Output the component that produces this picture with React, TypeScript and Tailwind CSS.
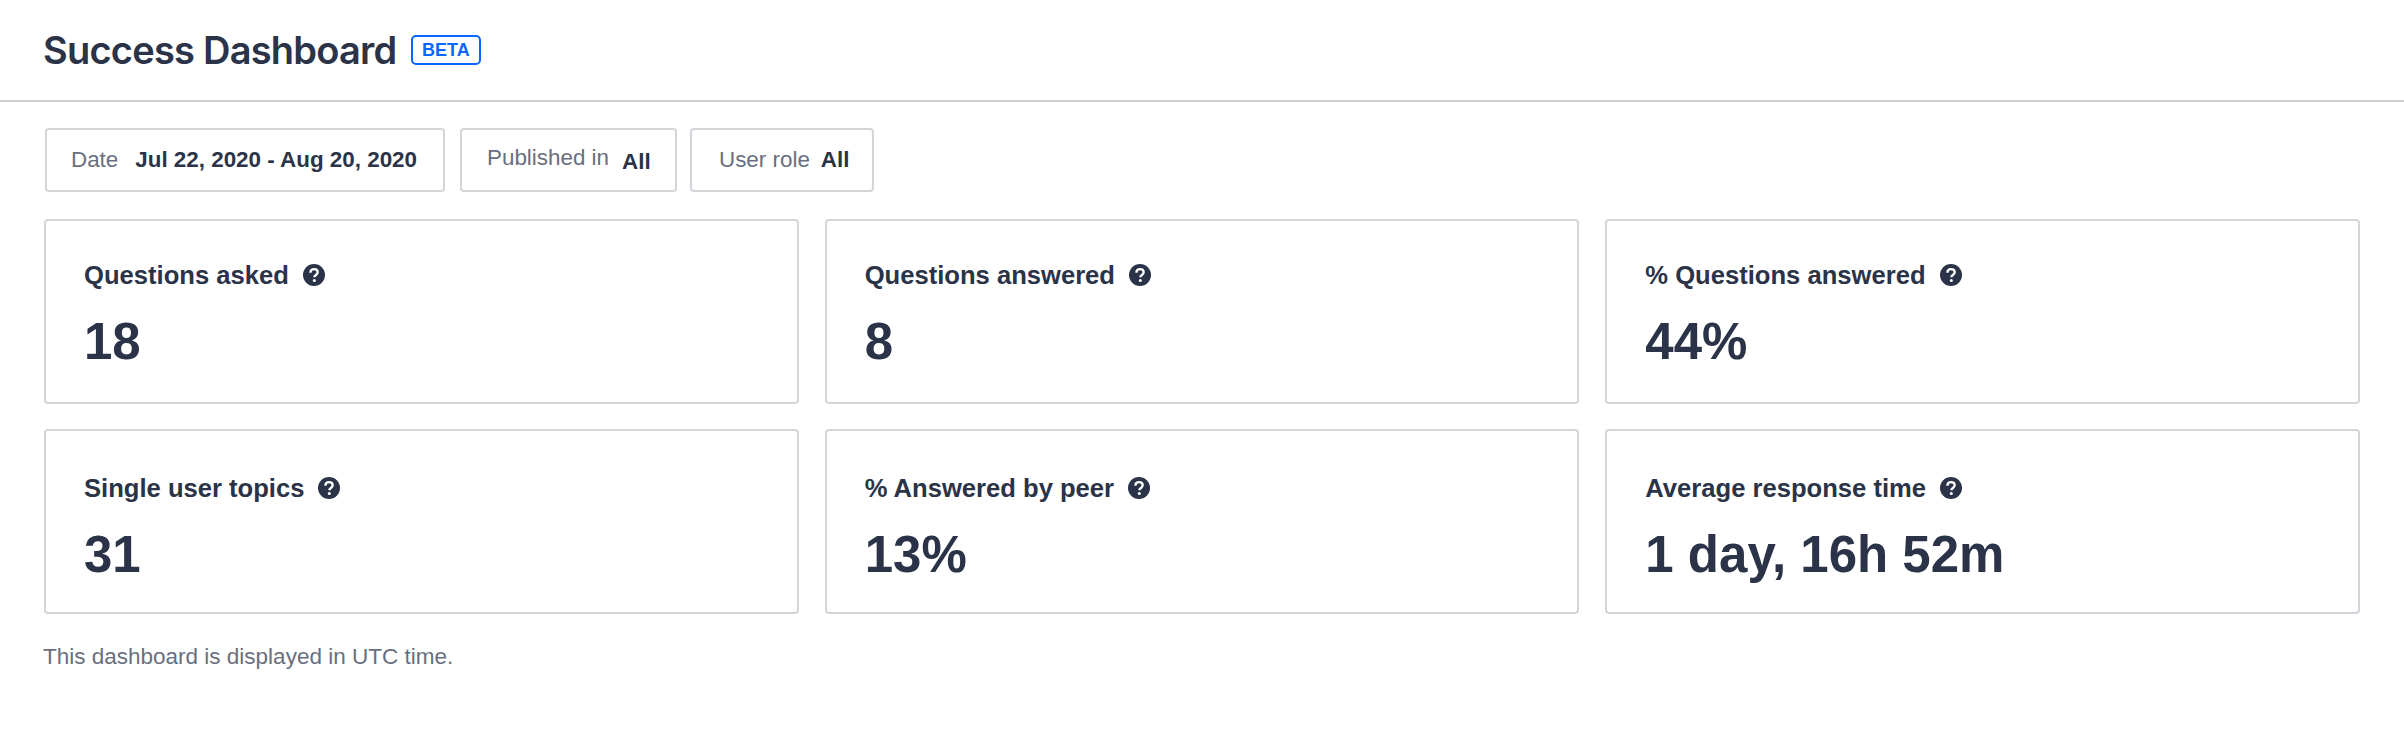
const font = "font-['Liberation_Sans',Arial,sans-serif]";

function HelpIcon() {
  return (
    <svg viewBox="0 0 22 22" className="h-[22px] w-[22px] shrink-0">
      <circle cx="11" cy="11" r="11" fill="#2a3348" />
      <path d="M7.4 8.7c0-2.2 1.6-3.5 3.7-3.5s3.6 1.3 3.6 3.1c0 2.6-3.4 2.7-3.4 5" fill="none" stroke="#fff" strokeWidth="2.3" />
      <circle cx="11.3" cy="16.6" r="1.5" fill="#fff" />
    </svg>
  );
}

function Filter({ label, value, box, shifted }: { label: string; value: string; box: string; shifted?: boolean }) {
  return (
    <div className={`flex h-[64px] items-center rounded-[4px] border-2 border-[#d3d5da] ${box}`}>
      <span className={`text-[22.4px] text-[#696f80] ${shifted ? "-translate-y-0.5" : ""}`}>{label}</span>
      <span className={`text-[22.4px] font-bold text-[#2a3348] ${shifted ? "translate-y-0.5" : ""}`}>{value}</span>
    </div>
  );
}

function Card({ title, value, low }: { title: string; value: string; low?: boolean }) {
  return (
    <div className={`flex h-[185px] flex-col rounded-[4px] border-2 border-[#d3d5da] px-[38px] ${low ? "pt-[41px]" : "pt-[38px]"}`}>
      <div className="flex h-[32px] items-center gap-[14px]">
        <span className="text-[25.6px] font-bold text-[#2a3348]">{title}</span>
        <HelpIcon />
      </div>
      <div className="mt-[21px] text-[51px] leading-[60px] font-bold text-[#2a3348]">{value}</div>
    </div>
  );
}

export default function App() {
  return (
    <div className={`h-[756px] bg-white ${font}`}>
      <header className="flex h-[102px] items-center gap-[14px] border-b-2 border-[#cfd0d3] px-[43px]">
        <h1 className="font-['Inter'] text-[38px] font-semibold tracking-[-0.02em] text-[#2a3348]">Success Dashboard</h1>
        <span className="rounded-[5px] border-2 border-[#0a66ff] px-[9.5px] text-[18px] leading-[26px] font-bold text-[#0a66ff]">BETA</span>
      </header>
      <div className="px-[44px] pt-[26px]">
        <div className="flex pl-px">
          <Filter label="Date" value="Jul 22, 2020 - Aug 20, 2020" box="w-[400px] gap-[17px] pl-[24px]" />
          <Filter label="Published in" value="All" box="ml-[15px] w-[217px] gap-[13px] pl-[25px]" shifted />
          <Filter label="User role" value="All" box="ml-[13px] w-[184px] gap-[11px] pl-[27px]" />
        </div>
        <div className="mt-[27px] grid grid-cols-3 gap-x-[26px] gap-y-[25px]">
          <Card title="Questions asked" value="18" />
          <Card title="Questions answered" value="8" />
          <Card title="% Questions answered" value="44%" />
          <Card title="Single user topics" value="31" low />
          <Card title="% Answered by peer" value="13%" low />
          <Card title="Average response time" value="1 day, 16h 52m" low />
        </div>
        <p className="mt-[26px] -ml-px text-[22.5px] text-[#696f80]">This dashboard is displayed in UTC time.</p>
      </div>
    </div>
  );
}
